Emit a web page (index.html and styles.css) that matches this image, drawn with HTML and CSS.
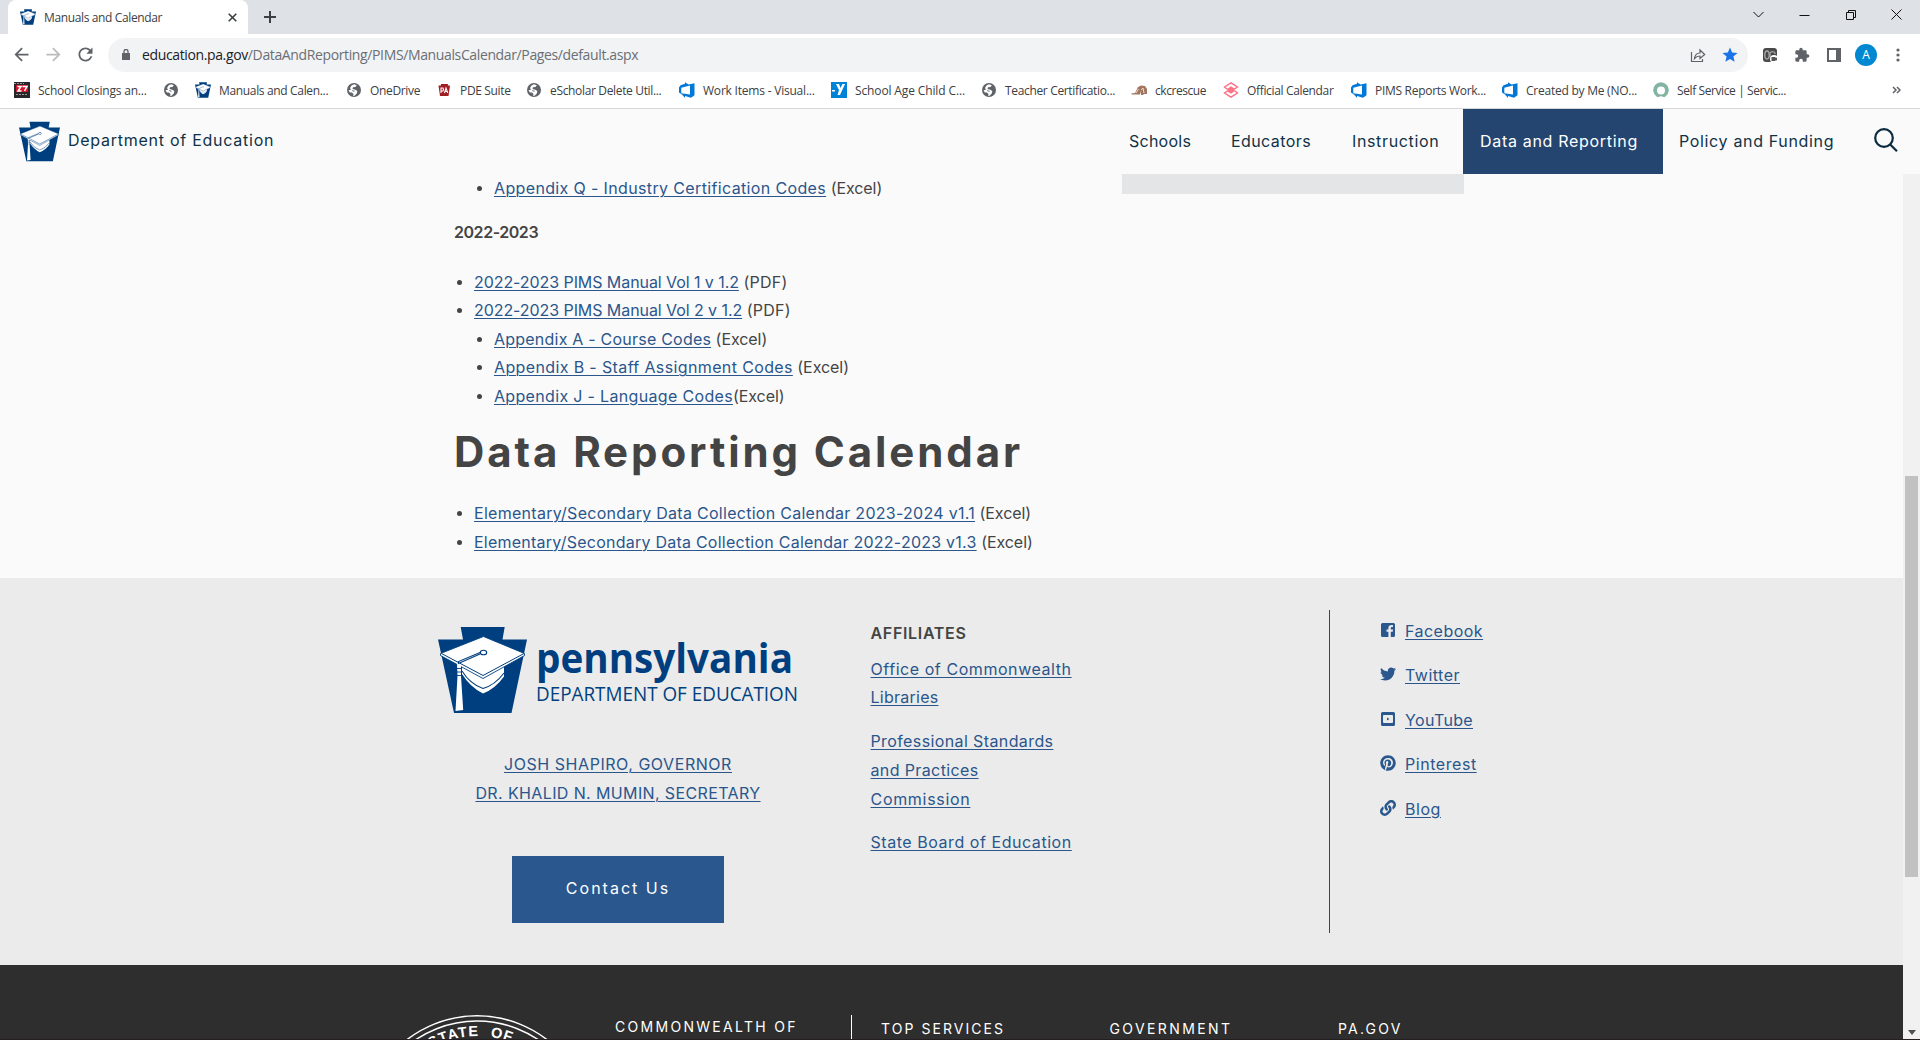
FILE: index.html
```html
<!DOCTYPE html>
<html lang="en">
<head>
<meta charset="utf-8">
<title>Manuals and Calendar</title>
<link rel="stylesheet" href="styles.css">
</head>
<body>
<svg class="defs" aria-hidden="true">
  <symbol id="keystone" viewBox="0 0 89 86">
    <path fill="#003f7f" d="M22.7 0h44l-2.2 12.5H89L73.5 86H16L0 12.5h25z"/>
    <path fill="#fff" d="M24 36.500L45 48l21-11.500v13Q57 62 45 66.500 32 60 24 47z"/>
    <path fill="none" stroke="#003f7f" stroke-width="1.100" d="M24 44Q32 57 45 61.500 57 58 66 46"/>
    <path fill="#fff" stroke="#003f7f" stroke-width=".9" d="M2.500 26.500L45.500 9.500 86.500 26.500v2L45 51.500 2.500 28.500z"/>
    <path fill="none" stroke="#003f7f" stroke-width="1" d="M3.500 26.500L45 48.500l41-22"/>
    <path fill="none" stroke="#003f7f" stroke-width="1.100" d="M20.500 37v-2.500L42 25.500M21.500 36L42 27"/>
    <ellipse cx="45.500" cy="25.500" rx="3.200" ry="2.300" fill="none" stroke="#003f7f" stroke-width="1.100"/>
    <path fill="#fff" d="M19 37h4v12l2.200 34-7.700 1L19.500 49z"/>
    <path stroke="#003f7f" stroke-width=".9" d="M18.500 41.500h5M18.500 45h5M18.500 48.500h5"/>
  </symbol>
  <symbol id="globe" viewBox="0 0 16 16">
    <circle cx="8" cy="8" r="7" fill="#5f6368"/>
    <path fill="#fff" d="M10.800 3.200L9.500 5 7 5.300 6.500 7l2.800.7 2 1.300-.5 2.500-2.300 2.300-1.300.2.300-2L6 10.500H3.800L2.500 8h3L7 9.500h1.800L8.500 8.800 5 8 4 6l1.500-2.500L8 2.300z"/>
  </symbol>
  <symbol id="devops" viewBox="0 0 16 16">
    <path fill="#0078d7" fill-rule="evenodd" d="M0 5.500L1.500 3.200 6 1.700 6 .2 9.500 2.500 15.500 1.300v12L12 15.800 6 14v1.900L3 12.500 0 10.500zM2.300 5.700v5.500L11 12.500V3.600z"/>
  </symbol>
  <symbol id="back" viewBox="0 0 24 24"><path d="M20 11H7.830l5.590-5.590L12 4l-8 8 8 8 1.410-1.410L7.830 13H20v-2z"/></symbol>
</svg>

<div class="tabstrip">
  <div class="tab">
    <svg class="fav"><use href="#keystone"/></svg>
    <span class="tab-title">Manuals and Calendar</span>
    <svg class="tab-close" viewBox="0 0 9 9"><path d="M.7.700l7.600 7.600M8.300.7L.7 8.300"/></svg>
  </div>
  <svg class="newtab" viewBox="0 0 12 12"><path d="M6 0v12M0 6h12"/></svg>
  <div class="winctl">
    <svg viewBox="0 0 11 11"><path d="M.5 3l5 5 5-5"/></svg>
    <svg viewBox="0 0 11 11"><path d="M.5 6.500h10"/></svg>
    <svg viewBox="0 0 11 11"><path d="M1.500 3.500h7v7h-7zM3.500 3.500v-2h7v7h-2"/></svg>
    <svg viewBox="0 0 11 11"><path d="M.5.500l10 10M10.500.500l-10 10"/></svg>
  </div>
</div>

<div class="toolbar">
  <svg class="nav-ic"><use href="#back"/></svg>
  <svg class="nav-ic forward"><use href="#back"/></svg>
  <svg class="nav-ic" viewBox="0 0 24 24"><path d="M17.650 6.350C16.200 4.900 14.210 4 12 4c-4.420 0-7.990 3.580-7.990 8s3.570 8 7.990 8c3.730 0 6.840-2.550 7.730-6h-2.080c-.82 2.330-3.040 4-5.650 4-3.310 0-6-2.690-6-6s2.690-6 6-6c1.660 0 3.140.69 4.220 1.780L13 11h7V4l-2.350 2.350z"/></svg>
  <div class="omnibox">
    <svg class="lock" viewBox="0 0 8 11"><path d="M0 4h8v7H0z"/><path class="shackle" d="M2 4.500V2.500a2 2 0 0 1 4 0v2"/></svg>
    <span class="url"><b>education.pa.gov</b>/DataAndReporting/PIMS/ManualsCalendar/Pages/default.aspx</span>
    <svg class="share" viewBox="0 0 16 16"><path d="M1.500 5v9.500h11V12M4.500 11.500C5 8 7 6 10 6V3l4.700 4.500-4.700 4V9C7.500 9 6 9.700 4.500 11.500z"/></svg>
    <svg class="star" viewBox="0 0 24 24"><path d="M12 17.270L18.180 21l-1.640-7.030L22 9.240l-7.190-.61L12 2 9.190 8.630 2 9.240l5.460 4.730L5.820 21z"/></svg>
  </div>
  <div class="actions">
    <svg viewBox="0 0 16 16"><rect x="1" y="1" width="14" height="14" rx="3" fill="#4a4a4a"/><g fill="none" stroke="#aaa" stroke-width="1.300"><ellipse cx="5" cy="8" rx="2.200" ry="4"/><path d="M8 10V6a3 3 0 0 1 5 0v1"/></g><circle cx="12" cy="12" r="4" fill="#fff"/><path d="M9.500 10h4v1l1.500-.5v3l-1.500-.5v1h-4z" fill="#555"/></svg>
    <svg viewBox="0 0 24 24"><path d="M20.500 11H19V7c0-1.100-.9-2-2-2h-4V3.500C13 2.120 11.880 1 10.500 1S8 2.120 8 3.500V5H4c-1.100 0-1.990.9-1.990 2v3.800H3.500c1.490 0 2.700 1.210 2.700 2.700s-1.210 2.700-2.700 2.700H2V20c0 1.100.9 2 2 2h3.800v-1.500c0-1.490 1.210-2.700 2.700-2.700 1.490 0 2.700 1.210 2.700 2.700V22H17c1.100 0 2-.9 2-2v-4h1.500c1.380 0 2.500-1.120 2.500-2.500S21.880 11 20.500 11z"/></svg>
    <svg viewBox="0 0 16 16"><path fill-rule="evenodd" d="M1 1h14v14H1zM3 3v10h7V3z"/></svg>
    <span class="avatar">A</span>
    <svg viewBox="0 0 16 16"><circle cx="8" cy="3" r="1.600"/><circle cx="8" cy="8" r="1.600"/><circle cx="8" cy="13" r="1.600"/></svg>
  </div>
</div>

<div class="bookmarks">
  <a class="bm w125"><svg viewBox="0 0 16 16"><path fill="#29262b" d="M0 0h16v16H0z"/><path fill="#d5122c" d="M2 3h12v7H2z"/><path fill="none" stroke="#fff" stroke-width="1.500" d="M3.500 4.500h3.500L4 9h3.500M8.500 4.500H13L10.500 9"/><path stroke="#999" stroke-dasharray="2 1" d="M2 12.500h12M0 1.500h10"/></svg><span class="k27">School Closings an...</span></a>
  <a class="bm icon"><svg><use href="#globe"/></svg></a>
  <a class="bm"><svg><use href="#keystone"/></svg><span class="k35">Manuals and Calen...</span></a>
  <a class="bm w66"><svg><use href="#globe"/></svg><span class="k35">OneDrive</span></a>
  <a class="bm w67"><svg viewBox="0 0 16 16"><path fill="#a01c23" d="M5 2h7l-.3 1.500H14L12.500 14H4L2.500 3.500H5z"/><path fill="none" stroke="#fff" stroke-width="1.100" d="M5 11V6h2q1 1.500 0 3H5M8.500 11L10 6l1.800 5M9 9.500h2"/></svg><span class="k35">PDE Suite</span></a>
  <a class="bm w129"><svg><use href="#globe"/></svg><span class="k35">eScholar Delete Util...</span></a>
  <a class="bm w128"><svg><use href="#devops"/></svg><span class="k27">Work Items - Visual...</span></a>
  <a class="bm w126"><svg viewBox="0 0 16 16"><path fill="#0083d6" d="M0 0h16v16H0z"/><path fill="#fff" d="M5 2l3 6-1.500 5H9L14 2h-2.500L9.500 6 8 2zM1 8h3v1.500H1z"/></svg><span class="k20">School Age Child C...</span></a>
  <a class="bm w126"><svg><use href="#globe"/></svg><span class="k35">Teacher Certificatio...</span></a>
  <a class="bm w68"><svg viewBox="0 0 16 16"><path fill="#a3765f" d="M0 11.500l4-.5 3-6 3-1.500 4 .5 2 3v5h-3L12 13h-2V9l-1 3.500H1z"/><path fill="none" stroke="#f1dcd2" d="M5 11l2.500-4M10 8l2-2 1 5"/></svg><span class="k45">ckcrescue</span></a>
  <a class="bm w104"><svg viewBox="0 0 16 16"><path fill="none" stroke="#fb7185" stroke-width="1.400" d="M4.200 7.200L1.500 5 8 .8 14.500 5 8 9.200 5 7.200 8 5.200l3 2M11.800 8.800l2.700 2.200L8 15.200 1.500 11 8 6.800l3 2-3 2-3-2"/></svg><span class="k35">Official Calendar</span></a>
  <a class="bm"><svg><use href="#devops"/></svg><span class="k30">PIMS Reports Work...</span></a>
  <a class="bm"><svg><use href="#devops"/></svg><span class="k25">Created by Me (NO...</span></a>
  <a class="bm"><svg viewBox="0 0 16 16"><path fill="#81b5a1" fill-rule="evenodd" d="M3.500 14.500a7.800 7.800 0 1 1 9 0l-1.500.8Q8 13 5 15.300zM8 4.500a4 4 0 1 0 0 8 4 4 0 0 0 0-8z"/></svg><span class="k40">Self Service | Servic...</span></a>
  <svg class="more" viewBox="0 0 9 8"><path d="M1 1l3 3-3 3M5 1l3 3-3 3"/></svg>
</div>

<header class="site-head">
  <svg class="head-logo"><use href="#keystone"/></svg>
  <span class="dept">Department of Education</span>
  <nav class="menu">
    <a class="m-sch ls-25">Schools</a>
    <a class="m-edu ls-41">Educators</a>
    <a class="m-ins ls-64">Instruction</a>
    <a class="m-dat ls-69">Data and Reporting</a>
    <a class="m-pol ls-66">Policy and Funding</a>
  </nav>
  <svg class="search" viewBox="0 0 24 24"><circle cx="10" cy="10" r="8.800"/><path d="M16 16.200l7 7"/></svg>
  <div class="flyout"></div>
</header>

<div class="viewport">
  <div class="page">
    <main>
      <ul class="sub"><li><a class="ls-36">Appendix Q - Industry Certification Codes</a> <span class="nk">(Excel)</span></li></ul>
      <p class="year">2022-2023</p>
      <ul>
        <li><a class="ls-n7">2022-2023 PIMS Manual Vol 1 v 1.2</a> <span class="ls-24">(PDF)</span></li>
        <li><a class="ls-n7">2022-2023 PIMS Manual Vol 2 v 1.2</a> <span class="ls-24">(PDF)</span></li>
      </ul>
      <ul class="sub">
        <li><a class="ls-22">Appendix A - Course Codes</a> <span class="nk">(Excel)</span></li>
        <li><a class="ls-37">Appendix B - Staff Assignment Codes</a> <span class="nk">(Excel)</span></li>
        <li><a class="ls-33">Appendix J - Language Codes</a><span class="nk">(Excel)</span></li>
      </ul>
      <h1>Data Reporting Calendar</h1>
      <ul>
        <li><a class="ls-28">Elementary/Secondary Data Collection Calendar 2023-2024 v1.1</a> <span class="nk">(Excel)</span></li>
        <li><a class="ls-24">Elementary/Secondary Data Collection Calendar 2022-2023 v1.3</a> <span class="nk">(Excel)</span></li>
      </ul>
    </main>
    <section class="agency">
      <div class="brand">
        <div class="wordmark">
          <svg class="stone"><use href="#keystone"/></svg>
          <svg class="words" viewBox="0 0 262 86">
            <text class="pa" x="-1" y="46" textLength="257" lengthAdjust="spacingAndGlyphs">pennsylvania</text>
            <text class="doe" x="-1" y="74" textLength="262" lengthAdjust="spacingAndGlyphs">DEPARTMENT OF EDUCATION</text>
          </svg>
        </div>
        <p class="people"><a class="ls-55">JOSH SHAPIRO, GOVERNOR</a><br><a class="ls-38">DR. KHALID N. MUMIN, SECRETARY</a></p>
        <a class="contact">Contact Us</a>
      </div>
      <div class="affiliates">
        <h2>AFFILIATES</h2>
        <p><a class="ls-56">Office of Commonwealth</a><br><a class="ls-26">Libraries</a></p>
        <p><a class="ls-39">Professional Standards</a><br><a class="ls-38">and Practices</a><br><a class="ls-69">Commission</a></p>
        <p><a class="ls-55">State Board of Education</a></p>
      </div>
      <div class="social">
        <p><svg viewBox="0 0 16 16"><path fill-rule="evenodd" d="M2.500 1h11A1.500 1.500 0 0 1 15 2.500v11a1.500 1.500 0 0 1-1.500 1.500h-2.700V9.700h1.900l.4-2.200h-2.300V6.200c0-.7.400-1.100 1.200-1.100H13V3.200c-2.800-.5-4.600.5-4.600 2.700v1.600H6.500v2.200h1.900V15H2.500A1.500 1.500 0 0 1 1 13.500v-11A1.500 1.500 0 0 1 2.500 1z"/></svg><a class="ls-47">Facebook</a></p>
        <p><svg viewBox="0 0 512 512"><path d="M459.370 151.716c.325 4.548.325 9.097.325 13.645 0 138.720-105.583 298.558-298.558 298.558-59.452 0-114.680-17.219-161.137-47.106 8.447.974 16.568 1.299 25.340 1.299 49.055 0 94.213-16.568 130.274-44.832-46.132-.975-84.792-31.188-98.112-72.772 6.498.974 12.995 1.624 19.818 1.624 9.421 0 18.843-1.300 27.614-3.573-48.081-9.747-84.143-51.980-84.143-102.985v-1.299c13.969 7.797 30.214 12.670 47.431 13.319-28.264-18.843-46.781-51.005-46.781-87.391 0-19.492 5.197-37.360 14.294-52.954 51.655 63.675 129.300 105.258 216.365 109.807-1.624-7.797-2.599-15.918-2.599-24.040 0-57.828 46.782-104.934 104.934-104.934 30.213 0 57.502 12.670 76.670 33.137 23.715-4.548 46.456-13.320 66.599-25.340-7.798 24.366-24.366 44.833-46.132 57.827 21.117-2.273 41.584-8.122 60.426-16.243-14.292 20.791-32.161 39.308-52.628 54.253z"/></svg><a class="ls-49">Twitter</a></p>
        <p><svg viewBox="0 0 16 16"><path fill-rule="evenodd" d="M2.500 1h11A1.500 1.500 0 0 1 15 2.500v11a1.500 1.500 0 0 1-1.500 1.500h-11A1.500 1.500 0 0 1 1 13.500v-11A1.500 1.500 0 0 1 2.500 1zM4 4Q3 4 3 5v6q0 1 1 1h8q1 0 1-1V5q0-1-1-1z"/><path d="M7 6.500L9.500 8 7 9.500z"/></svg><a class="ls-34">YouTube</a></p>
        <p><svg viewBox="0 0 496 512"><path d="M496 256c0 137-111 248-248 248-25.600 0-50.200-3.900-73.400-11.100 10.100-16.500 25.200-43.500 30.800-65 3-11.600 15.400-59 15.400-59 8.100 15.400 31.700 28.500 56.800 28.500 74.800 0 128.700-68.800 128.700-154.300 0-81.900-66.900-143.200-152.900-143.200-107 0-163.900 71.800-163.900 150.100 0 36.400 19.400 81.700 50.300 96.100 4.700 2.200 7.200 1.200 8.300-3.300.8-3.400 5-20.300 6.900-28.100.6-2.500.3-4.700-1.700-7.100-10.100-12.500-18.300-35.300-18.300-56.600 0-54.700 41.400-107.600 112-107.600 60.900 0 103.600 41.500 103.600 100.900 0 67.100-33.900 113.600-78 113.600-24.300 0-42.600-20.100-36.700-44.800 7-29.500 20.500-61.300 20.500-82.600 0-19-10.200-34.900-31.400-34.900-24.900 0-44.900 25.700-44.900 60.200 0 22 7.400 36.800 7.400 36.800s-24.500 103.800-29 123.200c-5 21.400-3 51.600-.9 71.200C65.400 450.900 0 361.100 0 256 0 119 111 8 248 8s248 111 248 248z"/></svg><a class="ls-55">Pinterest</a></p>
        <p><svg viewBox="0 0 512 512"><path d="M326.612 185.391c59.747 59.809 58.927 155.698.36 214.590-.11.120-.24.250-.36.370l-67.200 67.200c-59.270 59.270-155.699 59.262-214.960 0-59.270-59.260-59.270-155.700 0-214.960l37.106-37.106c9.840-9.840 26.786-3.300 27.294 10.606.648 17.722 3.826 35.527 9.690 52.721 1.986 5.822.567 12.262-3.783 16.612l-13.087 13.087c-28.026 28.026-28.905 73.660-1.155 101.960 28.024 28.579 74.086 28.749 102.325.51l67.200-67.190c28.191-28.191 28.073-73.757 0-101.830-3.701-3.694-7.429-6.564-10.341-8.569a16.037 16.037 0 0 1-6.947-12.606c-.396-10.567 3.348-21.456 11.698-29.806l21.054-21.055c5.521-5.521 14.182-6.199 20.584-1.731a152.482 152.482 0 0 1 20.522 17.197zM467.547 44.449c-59.261-59.262-155.690-59.270-214.960 0l-67.200 67.200c-.12.120-.25.250-.36.370-58.566 58.892-59.387 154.781.36 214.590a152.454 152.454 0 0 0 20.521 17.196c6.402 4.468 15.064 3.789 20.584-1.731l21.054-21.055c8.350-8.350 12.094-19.239 11.698-29.806a16.037 16.037 0 0 0-6.947-12.606c-2.912-2.005-6.640-4.875-10.341-8.569-28.073-28.073-28.191-73.639 0-101.830l67.200-67.190c28.239-28.239 74.300-28.069 102.325.51 27.750 28.300 26.872 73.934-1.155 101.960l-13.087 13.087c-4.350 4.350-5.769 10.790-3.783 16.612 5.864 17.194 9.042 34.999 9.690 52.721.509 13.906 17.454 20.446 27.294 10.606l37.106-37.106c59.271-59.259 59.271-155.699.001-214.959z"/></svg><a class="ls-55">Blog</a></p>
      </div>
    </section>
    <footer>
      <svg class="seal" viewBox="0 0 180 25">
        <g fill="none" stroke="#fff" stroke-width="1.500"><circle cx="90" cy="115.500" r="114.700"/><circle cx="90" cy="115.500" r="109.500"/></g>
        <path id="arc" fill="none" d="M-4.500 115.500a94.500 94.500 0 0 1 189 0"/>
        <text><textPath href="#arc" startOffset="100">STATE OF</textPath></text>
      </svg>
      <div class="commonwealth">COMMONWEALTH OF</div>
      <div class="services">TOP SERVICES</div>
      <div class="government">GOVERNMENT</div>
      <div class="pagov">PA.GOV</div>
    </footer>
  </div>
  <div class="scrollbar"><div class="thumb"></div><div class="arrow"></div></div>
</div>
</body>
</html>
```
FILE: styles.css
```css
* { box-sizing: border-box; }
body {
  margin: 0;
  width: 1920px;
  height: 1040px;
  overflow: hidden;
  display: flex;
  flex-direction: column;
  background: #fafafa;
  font-family: Inter, sans-serif;
  font-size: 16px;
  color: #444;
}
svg { flex: none; display: block; }
p, ul, h1, h2 { margin: 0; padding: 0; }
.defs { position: absolute; width: 0; height: 0; }

/* browser window */
.tabstrip, .toolbar, .bookmarks { font-family: "Open Sans", "Noto Sans", sans-serif; font-size: 12px; flex: none; display: flex; align-items: center; }
.tabstrip { height: 34px; background: #dee1e6; padding-left: 8px; }
.tab { width: 240px; height: 34px; background: #fff; border-radius: 8px 8px 0 0; display: flex; align-items: center; padding: 0 11px 0 12px; }
.fav { width: 16px; height: 16px; margin-right: 8px; }
.tab-title { flex: 1; color: #3c4043; letter-spacing: -.37px; }
.tab-close { width: 9px; height: 9px; }
.tab-close path, .newtab path { stroke: #3c4043; stroke-width: 1.600; fill: none; }
.newtab { width: 12px; height: 12px; margin-left: 16px; }
.newtab path { stroke-width: 2; }
.winctl { margin-left: auto; display: flex; gap: 35px; padding: 0 18px 6px 0; }
.winctl svg { width: 11px; height: 11px; fill: none; stroke: #111; stroke-width: 1; }

.toolbar { height: 41px; background: #fff; padding-left: 11px; }
.nav-ic { width: 21px; height: 21px; margin-right: 11px; fill: #5f6368; }
.forward { transform: scaleX(-1); fill: #babcbe; }
.omnibox { width: 1640px; height: 34px; margin-left: 1px; border-radius: 17px; background: #f1f3f4; display: flex; align-items: center; padding: 0 9px 0 14px; }
.lock { width: 8px; height: 11px; fill: #5f6368; margin-right: 12px; }
.shackle { fill: none; stroke: #5f6368; stroke-width: 1.300; }
.url { flex: 1; font-size: 14px; letter-spacing: -.37px; color: #6b6f74; }
.url b { font-weight: 400; color: #202124; }
.share { width: 16px; height: 16px; margin-right: 15px; fill: none; stroke: #5f6368; stroke-width: 1.200; }
.star { width: 18px; height: 18px; fill: #1a73e8; }
.actions { display: flex; align-items: center; gap: 16px; padding-left: 14px; fill: #5f6368; }
.actions svg { width: 16px; height: 16px; }
.avatar { width: 22px; height: 22px; margin: 0 -3px; border-radius: 50%; background: #0288d1; color: #fff; text-align: center; line-height: 22px; }

.bookmarks { height: 34px; background: #fff; border-bottom: 1px solid #d5d7d9; padding: 0 19px 3px 14px; }
.bm { width: 135px; margin-right: 16px; display: flex; align-items: center; gap: 8px; color: #3c4043; white-space: nowrap; }
.bm svg { width: 16px; height: 16px; }
.icon { width: 16px; }
.w125 { width: 133px; } .w66 { width: 74px; } .w67 { width: 74px; } .w129 { width: 137px; }
.w128 { width: 136px; } .w126 { width: 134px; } .w68 { width: 76px; } .w104 { width: 112px; }
.k20 { letter-spacing: -.13px; } .k25 { letter-spacing: -.24px; } .k27 { letter-spacing: -.21px; } .k30 { letter-spacing: -.29px; }
.k35 { letter-spacing: -.34px; } .k40 { letter-spacing: -.4px; } .k45 { letter-spacing: -.45px; }
.more { width: 9px; height: 8px; margin-left: auto; fill: none; stroke: #5f6368; stroke-width: 1.500; }

/* site header */
.site-head { position: relative; flex: none; height: 65px; display: flex; align-items: center; background: #fafafa; color: #0f3247; }
.head-logo { width: 41px; height: 41px; margin-left: 19px; }
.dept { margin: -3px 0 0 8px; letter-spacing: .74px; }
.menu { margin-left: auto; height: 65px; display: flex; }
.menu a { line-height: 65px; white-space: nowrap; }
.m-sch { width: 102px; } .m-edu { width: 121px; } .m-ins { width: 111px; }
.menu .m-dat { width: 200px; padding-left: 17px; background: #234570; color: #fff; }
.menu .m-pol { width: 211px; padding-left: 16px; }
.search { width: 24px; height: 24px; margin: -3px 22px 0 0; fill: none; stroke: #0b2b40; stroke-width: 2.200; }
.flyout { position: absolute; left: 1122px; top: 65px; width: 342px; height: 20px; background: #e4e5e7; }

/* page and scrollbar */
.viewport { flex: 1; min-height: 0; display: flex; border-bottom: 1px solid #241e22; }
.page { width: 1903px; overflow: hidden; }
.scrollbar { width: 17px; background: #f1f1f1; padding: 302px 2px 4px 2px; display: flex; flex-direction: column; justify-content: space-between; align-items: center; }
.thumb { width: 13px; height: 401px; background: #c1c1c1; }
.arrow { border: 4px solid transparent; border-top: 5px solid #505050; border-bottom: 0; }

main { height: 404px; padding: 0 0 0 454px; }
ul { list-style: none; }
li { position: relative; height: 28.500px; line-height: 28.500px; padding-left: 20px; white-space: nowrap; }
li::before { content: ""; position: absolute; left: 3px; top: 12px; width: 5px; height: 5px; border-radius: 50%; background: #444; }
.sub { padding-left: 20px; }
main a, .people a, .affiliates a, .social a { color: #2a568c; text-decoration: underline; text-decoration-thickness: 1px; text-underline-offset: 2px; }
.nk { letter-spacing: -.06px; }
.year { margin: 15.500px 0 21px; height: 28.500px; line-height: 28.500px; font-weight: 600; letter-spacing: -.45px; }
h1 { margin: 17px 0 22px; font-size: 42px; line-height: 50px; font-weight: 700; letter-spacing: 2.900px; }

.agency { height: 387px; background: #ebebeb; display: flex; padding-left: 438px; }
.brand { width: 432.500px; padding-top: 49px; }
.wordmark { display: flex; gap: 10px; }
.stone { width: 89px; height: 86px; }
.words { width: 262px; height: 86px; overflow: visible; fill: #003f7f; }
.pa { font: 700 41px "Open Sans", sans-serif; }
.doe { font: 500 19.500px "Open Sans", sans-serif; }
.people { width: 360px; margin-top: 37px; text-align: center; line-height: 29px; }
.contact { display: block; width: 212px; height: 67px; margin: 48px 0 0 74px; background: #2a578d; color: #fff; text-align: center; line-height: 65px; letter-spacing: 2px; }
.affiliates { width: 458.500px; padding-top: 41px; line-height: 28.700px; }
.affiliates h2 { font-size: 16px; font-weight: 600; letter-spacing: .67px; line-height: 28.700px; margin-bottom: 7px; }
.affiliates p { margin-bottom: 15px; }
.social { height: 323px; margin-top: 32px; border-left: 1px solid #444; padding: 7px 0 0 50px; }
.social p { height: 44.400px; line-height: 28px; display: flex; }
.social svg { width: 16px; height: 16px; margin: 5px 9px 0 0; fill: #2a578d; }

footer { height: 75px; background: #2e2e2e; color: #fff; font-size: 14px; display: flex; padding: 50px 0 0 386.500px; line-height: 28px; }
.seal { width: 180px; height: 25px; }
.seal text { font: bold 14.500px "Liberation Sans", sans-serif; letter-spacing: 1px; word-spacing: 6px; fill: #fff; }
.commonwealth { margin-left: 48.500px; width: 237px; border-right: 1px solid #fff; letter-spacing: 2.300px; line-height: 24px; white-space: nowrap; }
.services { margin-left: 29px; width: 228.500px; letter-spacing: 2.050px; }
.government { width: 228.500px; letter-spacing: 2.400px; }
.pagov { letter-spacing: 2.200px; }

/* tracking */
.ls-n7 { letter-spacing: -.07px; } .ls-22 { letter-spacing: .22px; } .ls-24 { letter-spacing: .24px; }
.ls-26 { letter-spacing: .26px; } .ls-25 { letter-spacing: .25px; } .ls-28 { letter-spacing: .28px; }
.ls-33 { letter-spacing: .33px; } .ls-34 { letter-spacing: .34px; } .ls-36 { letter-spacing: .36px; }
.ls-37 { letter-spacing: .37px; } .ls-38 { letter-spacing: .38px; } .ls-39 { letter-spacing: .39px; }
.ls-41 { letter-spacing: .41px; } .ls-47 { letter-spacing: .47px; } .ls-49 { letter-spacing: .49px; }
.ls-55 { letter-spacing: .55px; } .ls-56 { letter-spacing: .56px; } .ls-64 { letter-spacing: .64px; }
.ls-66 { letter-spacing: .66px; } .ls-69 { letter-spacing: .69px; }
```
